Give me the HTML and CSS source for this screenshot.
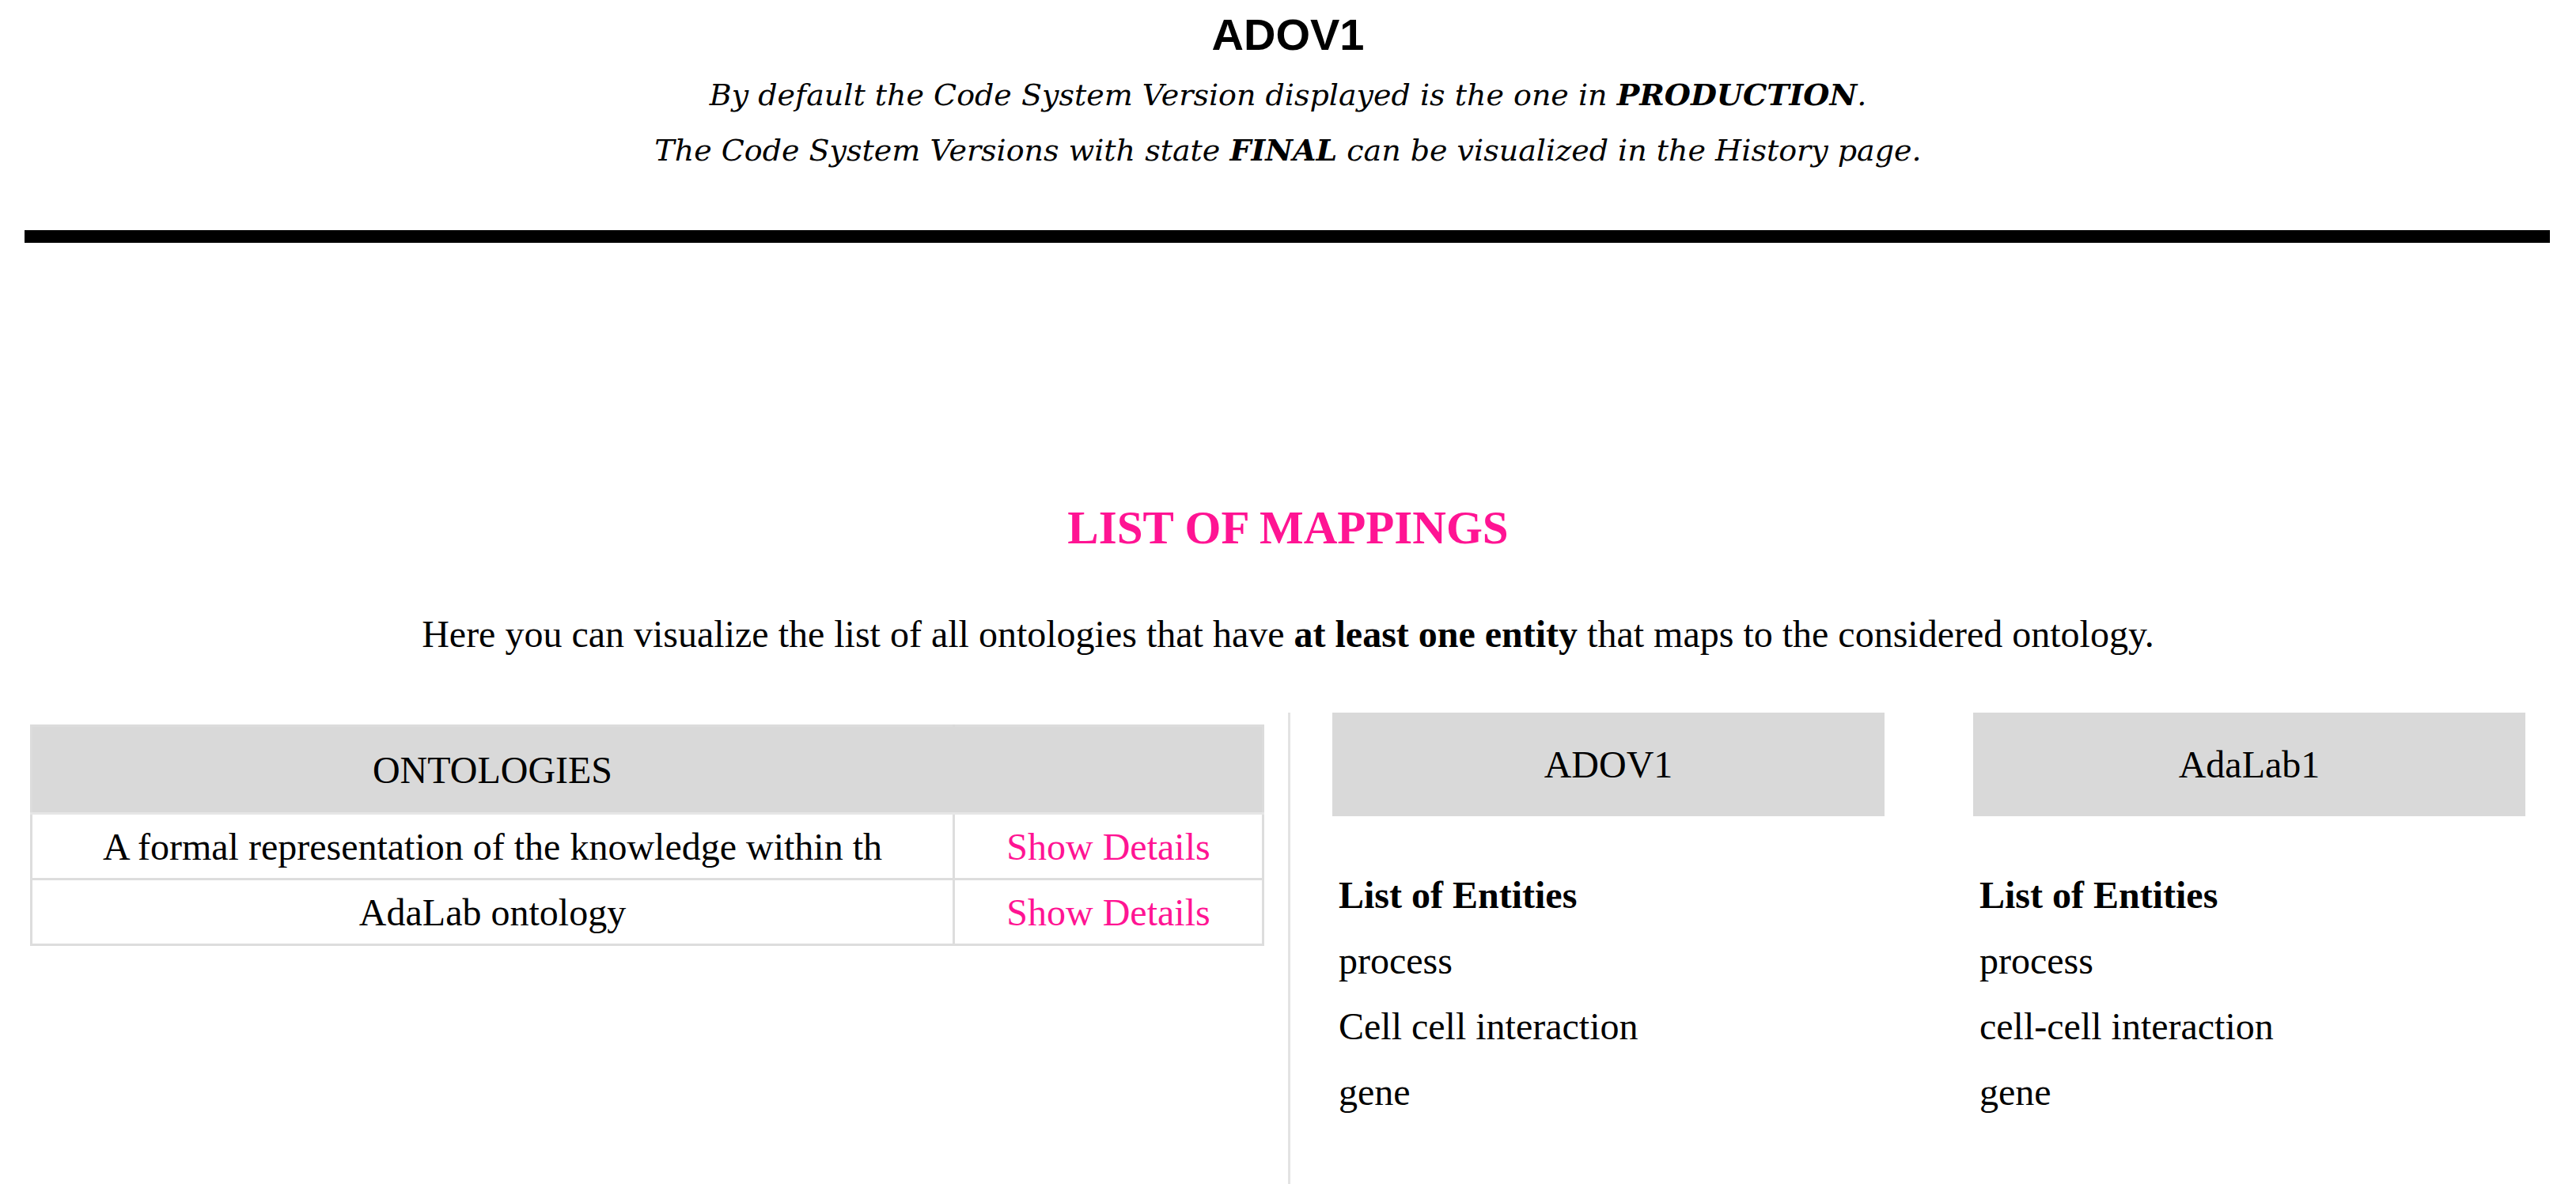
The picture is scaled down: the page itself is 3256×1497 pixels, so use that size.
FILE: index.html
```html
<!DOCTYPE html>
<html lang="en">
<head>
<meta charset="utf-8">
<title>ADOV1 - List of mappings</title>
<link rel="stylesheet" href="styles.css">
</head>
<body>
<header class="top">
  <h1 class="title">ADOV1</h1>
  <div class="notes">
    <p class="note">By default the Code System Version displayed is the one in <b>PRODUCTION</b>.</p>
    <p class="note">The Code System Versions with state <b>FINAL</b> can be visualized in the History page.</p>
  </div>
</header>
<div class="bar"></div>

<section class="mappings">
  <h2 class="mappings-title">LIST OF MAPPINGS</h2>
  <p class="intro">Here you can visualize the list of all ontologies that have <b>at least one entity</b> that maps to the considered ontology.</p>

  <div class="main">
    <div class="left">
      <table class="onto-table">
        <colgroup><col class="c1"><col class="c2"></colgroup>
        <thead>
          <tr><th>ONTOLOGIES</th><th></th></tr>
        </thead>
        <tbody>
          <tr><td>A formal representation of the knowledge within th</td><td><a class="link" href="#">Show Details</a></td></tr>
          <tr><td>AdaLab ontology</td><td><a class="link" href="#">Show Details</a></td></tr>
        </tbody>
      </table>
    </div>
    <div class="divider"></div>
    <div class="right">
      <div class="card">
        <div class="card-head">ADOV1</div>
        <div class="card-body">
          <p class="ent ent-title">List of Entities</p>
          <p class="ent">process</p>
          <p class="ent">Cell cell interaction</p>
          <p class="ent">gene</p>
        </div>
      </div>
      <div class="card">
        <div class="card-head">AdaLab1</div>
        <div class="card-body">
          <p class="ent ent-title">List of Entities</p>
          <p class="ent">process</p>
          <p class="ent">cell-cell interaction</p>
          <p class="ent">gene</p>
        </div>
      </div>
    </div>
  </div>
</section>
</body>
</html>
```
FILE: styles.css
```css
html, body {
  margin: 0;
  padding: 0;
  background: #ffffff;
  color: #000000;
}
body {
  font-family: "Liberation Serif", "Times New Roman", serif;
  font-size: 48px;
  overflow: hidden;
}
.top {
  text-align: center;
  padding-top: 12px;
}
.title {
  margin: 0;
  font-family: "Liberation Sans", Arial, sans-serif;
  font-weight: bold;
  font-size: 56px;
  line-height: 64px;
}
.notes {
  margin-top: 9px;
}
.note {
  margin: 0;
  font-family: "DejaVu Serif", serif;
  font-style: italic;
  font-size: 38px;
  line-height: 70px;
}
.bar {
  height: 16px;
  background: #000;
  margin: 66px 33px 0 31px;
}
.mappings {
  text-align: center;
}
.mappings-title {
  margin: 327px 0 0;
  color: #ff1493;
  font-weight: bold;
  font-size: 59px;
  line-height: 66px;
}
.intro {
  margin: 74px 0 0;
  line-height: 56px;
}
.main {
  display: flex;
  margin-top: 71px;
  padding-left: 38px;
  height: 600px;
  text-align: left;
}
.left {
  width: 1557px;
  margin-top: 15px;
  margin-right: 33px;
}
.onto-table {
  width: 1557px;
  border-collapse: collapse;
  table-layout: fixed;
}
.c1 { width: 1166px; }
.c2 { width: 391px; }
.onto-table th {
  background: #d9d9d9;
  font-weight: normal;
  text-align: center;
  height: 108px;
  padding: 0;
  border: 3px solid #dcdcdc;
  border-bottom-color: #e6e6e6;
}
.onto-table th:first-child {
  border-right-color: #d9d9d9;
}
.onto-table th + th {
  border-left-color: #d9d9d9;
}
.onto-table td {
  height: 80px;
  padding: 0;
  text-align: center;
  border: 3px solid #dddddd;
  white-space: nowrap;
  overflow: hidden;
}
.link {
  color: #ff1493;
  text-decoration: none;
}
.divider {
  width: 3px;
  background: #e3e3e3;
  margin-right: 53px;
}
.right {
  display: flex;
  gap: 112px;
}
.card {
  width: 698px;
}
.card-head {
  height: 131px;
  background: #d9d9d9;
  display: flex;
  align-items: center;
  justify-content: center;
}
.card-body {
  padding: 58px 0 0 8px;
}
.ent {
  margin: 0;
  line-height: 83px;
}
.ent-title {
  font-weight: bold;
}
```
